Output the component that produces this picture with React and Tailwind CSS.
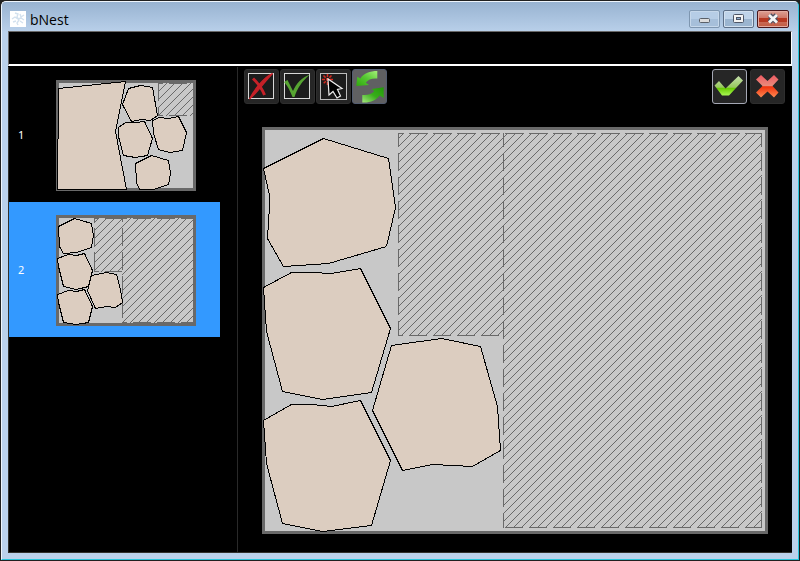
import React from "react";

function Piece({ points }) {
  return <polygon points={points} fill="#dccdc0" stroke="#000" strokeWidth="1" />;
}

// Diagonal strokes, one every 8px, cut to the given rectangle.
function hatchPath(x, y, w, h, phase) {
  const parts = [];
  const first = Math.ceil((x + y - phase) / 8) * 8 + phase;
  for (let sum = first; sum < x + y + w + h; sum += 8) {
    const c = sum + 1;
    const x0 = Math.max(x, c - (y + h));
    const x1 = Math.min(x + w, c - y);
    if (x1 > x0) parts.push(`M${x0} ${c - x0}L${x1} ${c - x1}`);
  }
  return parts.join("");
}

// Unused sheet area, filled with diagonal strokes and outlined with dashes.
function Hatch({ x, y, w, h, phase = 0, right = true, dashX = 13, dashY = 4 }) {
  return (
    <g stroke="#696969" fill="none">
      <path d={hatchPath(x, y, w, h, phase)} />
      <g strokeDasharray="18 6">
        <path d={`M${x} ${y + 0.5}h${w}`} strokeDashoffset={dashX} />
        <path d={`M${x} ${y + h - 0.5}h${w}`} strokeDashoffset={dashX} />
        <path d={`M${x + 0.5} ${y}v${h}`} strokeDashoffset={dashY} />
        {right && <path d={`M${x + w - 0.5} ${y}v${h}`} strokeDashoffset={dashY} />}
      </g>
    </g>
  );
}

function Sheet({ x, y, w, h, children }) {
  return (
    <svg className="block shrink-0" width={w} height={h} viewBox={`${x} ${y} ${w} ${h}`} shapeRendering="crispEdges">
      <rect x={x} y={y} width={w} height={h} rx="1" fill="#696969" />
      <rect x={x + 3} y={y + 3} width={w - 6} height={h - 6} fill="#c8c8c8" />
      {children}
    </svg>
  );
}

function SheetOne() {
  return (
    <Sheet x={56} y={80} w={140} h={111}>
      <Hatch x={158} y={83} w={36} h={33} phase={1} dashY={0} />
      <Piece points="58.5,88.5 125.5,81.5 115.5,131.5 126.5,189.5 57.5,189.5 57.5,139.5 58.5,138.5" />
      <Piece points="128.5,88.5 140.5,85.5 152.5,87.5 157.5,115.5 150.5,120.5 141.5,119.5 131.5,121.5 122.5,104.5" />
      <Piece points="118.5,127.5 125.5,122.5 136.5,122.5 144.5,121.5 152.5,138.5 147.5,155.5 135.5,157.5 123.5,155.5 118.5,136.5" />
      <Piece points="152.5,120.5 159.5,117.5 168.5,118.5 178.5,116.5 186.5,132.5 182.5,150.5 169.5,152.5 158.5,149.5 153.5,133.5" />
      <Piece points="135.5,163.5 151.5,155.5 168.5,160.5 170.5,173.5 168.5,184.5 153.5,189.5 139.5,189.5 136.5,182.5" />
    </Sheet>
  );
}

function SheetTwo() {
  return (
    <Sheet x={56} y={215} w={140} h={111}>
      <Hatch x={94} y={218} w={28} h={54} phase={4} right={false} dashY={14} />
      <Hatch x={122} y={218} w={72} h={105} phase={4} dashY={14} />
      <Piece points="58.5,226.5 74.5,218.5 91.5,223.5 93.5,235.5 91.5,247.5 76.5,252.5 63.5,253.5 59.5,246.5" />
      <Piece points="57.5,258.5 68.5,254.5 76.5,255.5 84.5,253.5 92.5,270.5 88.5,286.5 76.5,289.5 63.5,286.5 58.5,266.5" />
      <Piece points="57.5,294.5 68.5,290.5 76.5,291.5 84.5,289.5 92.5,306.5 88.5,322.5 76.5,324.5 63.5,322.5 58.5,302.5" />
      <Piece points="91.5,275.5 106.5,272.5 116.5,274.5 120.5,289.5 122.5,302.5 115.5,307.5 106.5,306.5 95.5,308.5 87.5,290.5" />
    </Sheet>
  );
}

function MainSheet() {
  return (
    <Sheet x={262} y={127} w={506} h={407}>
      <Hatch x={398} y={133} w={105} h={203} right={false} />
      <Hatch x={503} y={133} w={259} h={395} dashX={22} />
      <Piece points="323.5,138.5 388.5,158.5 395.5,207.5 386.5,246.5 328.5,263.5 283.5,266.5 267.5,238.5 269.5,206.5 269.5,195.5 263.5,168.5" />
      <Piece points="263.5,287.5 291.5,272.5 311.5,272.5 331.5,273.5 360.5,268.5 390.5,328.5 371.5,392.5 322.5,399.5 282.5,391.5 266.5,331.5" />
      <Piece points="263.5,420.5 291.5,404.5 311.5,404.5 331.5,406.5 360.5,400.5 390.5,460.5 371.5,525.5 322.5,531.5 282.5,523.5 266.5,463.5" />
      <Piece points="391.5,345.5 441.5,338.5 480.5,346.5 497.5,406.5 500.5,450.5 472.5,466.5 432.5,464.5 402.5,470.5 372.5,410.5" />
    </Sheet>
  );
}

function ToolButton({ label, className = "bg-[#262626] border-[#2e2e2e]", children }) {
  return (
    <button aria-label={label} className={"block h-[35px] w-[35px] shrink-0 rounded-[3px] border " + className}>
      <svg className="block" width="33" height="33" viewBox="1 1 33 33" fill="none">
        {children}
      </svg>
    </button>
  );
}

function TitleBar() {
  return (
    <header className="flex h-[29px] shrink-0 bg-linear-to-b from-[#98b3d1] to-[#b8cfe9] pl-[8px] pr-[9px]">
      <svg className="mt-[9px] shrink-0" width="16" height="16" viewBox="0 0 16 16" fill="none">
        <rect width="16" height="16" fill="#fff" />
        <path d="M5 2l3 1-1 3 2 3-2 3 1 2M2 8l3-2 3 2 3-1 3 2M3 11l3-1M10 3l1 3 3-2M10 10l3 2" stroke="#d3e1ee" strokeWidth="1.4" />
      </svg>
      <h1 className="ml-[4px] mt-[8px] text-[14px] leading-[20px] text-black">bNest</h1>
      <div className="ml-auto mt-[8px] flex h-[18px] gap-[3px]">
        <div className="w-[31px] rounded-[2px] border border-[#7e96b0] bg-linear-to-b from-[#b6cde6] from-50% to-[#a6bfda] to-50% shadow-[inset_0_0_0_1px_#c6d8eb]">
          <svg className="block" width="29" height="16" fill="none">
            <rect x="9.5" y="7.5" width="10" height="4" rx="1" fill="#dcdcdc" stroke="#5a6068" />
          </svg>
        </div>
        <div className="w-[31px] rounded-[2px] border border-[#5d6f87] bg-linear-to-b from-[#bfd3e9] from-50% to-[#9bb5d0] to-50% shadow-[inset_0_0_0_1px_#d2e0ef]">
          <svg className="block" width="29" height="16" fill="none">
            <rect x="9.5" y="3.5" width="10" height="8" rx="1" fill="#f4f4f4" stroke="#4e5667" />
            <rect x="12.5" y="6.5" width="4" height="2" fill="#8faed0" stroke="#4e5667" />
          </svg>
        </div>
        <div className="w-[32px] rounded-[2px] border border-[#48161b] bg-linear-to-b from-[#dba095] from-0% via-[#ce7465] via-45% to-[#c05a40] to-100% shadow-[inset_0_0_0_1px_#e3aaa0]">
          <svg className="block" width="30" height="16" fill="none">
            <rect x="1" y="7" width="28" height="4" fill="#b63822" />
            <path d="M11.5 4l7 7M18.500 4l-7 7" stroke="#4c5061" strokeWidth="5" />
            <path d="M11 4l8 7.500M19 4l-8 7.500" stroke="#f4f4f4" strokeWidth="2.800" />
          </svg>
        </div>
      </div>
    </header>
  );
}

function Toolbar() {
  return (
    <div className="flex gap-px pl-[6px] pr-[7px] pt-[2px]">
      <ToolButton label="Clear selection">
        <rect x="4.5" y="4.5" width="25" height="25" fill="#1c1c1c" stroke="#d8d8d8" />
        <path d="M5.5 30C12 25 22 11 28.5 4.500C20 8 10 21 5.500 30Z" fill="#c62128" stroke="#c62128" strokeWidth="1.300" />
        <path d="M9 9.500Q17 17 20.500 26" stroke="#c62128" strokeWidth="3" />
      </ToolButton>
      <ToolButton label="Select all">
        <rect x="4.500" y="4.500" width="25" height="25" fill="#1c1c1c" stroke="#d8d8d8" />
        <path d="M4 13L7.500 11L13 22C16 15 22 8 30 5.500C22 12 17 20 14.500 28H12.500C10 22 8 17 4 13Z" fill="#57a532" />
      </ToolButton>
      <ToolButton label="Pick piece">
        <rect x="4.500" y="4.500" width="26" height="26" fill="#1c1c1c" stroke="#bdbdbd" />
        <path d="M11.500 5v11M6 10.500h11M7.500 6.500l8 8M15.500 6.500l-8 8" stroke="#d52a1e" strokeWidth="1.500" strokeDasharray="3 1" />
        <path d="M12 10L13 26L17 22.500L21 29L24.500 27L21.500 20.500L26 19.500Z" fill="#000" stroke="#eee" strokeWidth="1.200" />
      </ToolButton>
      <ToolButton label="Rotate sheets" className="border-[#535c70] bg-[#606062]">
        <defs>
          <linearGradient id="arrow" x1="0" y1="1" x2="1" y2="0">
            <stop offset="0" stopColor="#2fa80c" />
            <stop offset=".5" stopColor="#55c832" />
            <stop offset="1" stopColor="#a5f078" />
          </linearGradient>
          <linearGradient id="arrow-back" x1="1" y1="0" x2="0" y2="1">
            <stop offset="0" stopColor="#229b08" />
            <stop offset=".5" stopColor="#38ad1a" />
            <stop offset="1" stopColor="#a5e97e" />
          </linearGradient>
        </defs>
        <path d="M4.300 17L5.300 7.700L8.300 9.500C12 4 18 2 25.300 2V9.500C20 9 16 10.500 13.700 13.700L17 16Z" fill="url(#arrow)" />
        <path d="M31.700 18.300L19.500 20L22.300 22C20 25 16 26.500 10.300 26V33.500C18 34 24 31.500 27.700 26.500L31.700 29Z" fill="url(#arrow-back)" />
      </ToolButton>
      <div className="ml-auto flex gap-[3px]">
        <ToolButton label="Accept" className="border-[#a5a8b5] bg-[#262626]">
          <defs>
            <linearGradient id="accept" x1="0" y1="0" x2="0" y2="1">
              <stop offset="0" stopColor="#c5dfac" />
              <stop offset=".58" stopColor="#98c85e" />
              <stop offset=".62" stopColor="#66c900" />
              <stop offset="1" stopColor="#a9f754" />
            </linearGradient>
          </defs>
          <path d="M2.500 16.500L7 12L13.500 19.500L26.500 7L31 11.500L17 26.500H10Z" fill="url(#accept)" />
        </ToolButton>
        <ToolButton label="Cancel">
          <defs>
            <linearGradient id="cancel" x1="0" y1="0" x2="0" y2="1">
              <stop offset="0" stopColor="#ef5961" />
              <stop offset=".48" stopColor="#e98b7b" />
              <stop offset=".52" stopColor="#f0320c" />
              <stop offset="1" stopColor="#ff8c55" />
            </linearGradient>
          </defs>
          <path d="M11 6L17.500 12L24 6L28.500 10.500L22.500 17L28.500 23.500L24 28.500L17.500 22.500L11 28.500L6 23.500L12.500 17L6 10.500Z" fill="url(#cancel)" />
        </ToolButton>
      </div>
    </div>
  );
}

function ListItem({ number, selected, children }) {
  return (
    <li className={"flex h-[135px] w-[211px] " + (selected ? "bg-[#3399ff]" : "")}>
      <span className="mt-[61px] w-[47px] pl-[9px] font-['Noto_Sans',sans-serif] text-[11px] leading-[14px] text-white">{number}</span>
      <div className="pt-[13px]">{children}</div>
    </li>
  );
}

export default function App() {
  return (
    <div className="h-[561px] w-[800px] overflow-hidden bg-[#202020] pl-px pt-px font-['Open_Sans',sans-serif]">
      <div className="flex h-[559px] w-[798px] flex-col overflow-hidden rounded-t-[5px] border-b border-l border-r border-t border-b-[#28c5dc] border-l-[#eef5fc] border-r-[#28c5dc] border-t-[#eef5fc] bg-[#bad1eb]">
        <TitleBar />
        <div className="mx-[6px] flex h-[522px] shrink-0 flex-col bg-black">
          <div className="mb-px h-[35px] shrink-0 border-b-2 border-l border-r border-t border-b-white border-l-[#696969] border-r-white border-t-[#696969]" />
          <div className="flex min-h-0 flex-1 border-b border-l border-[#30302c]">
            <ol className="h-full w-[229px] shrink-0 border-r border-[#292929]">
              <ListItem number="1">
                <SheetOne />
              </ListItem>
              <ListItem number="2" selected>
                <SheetTwo />
              </ListItem>
            </ol>
            <main className="flex flex-1 flex-col">
              <Toolbar />
              <div className="pl-[24px] pt-[23px]">
                <MainSheet />
              </div>
            </main>
          </div>
        </div>
      </div>
    </div>
  );
}
